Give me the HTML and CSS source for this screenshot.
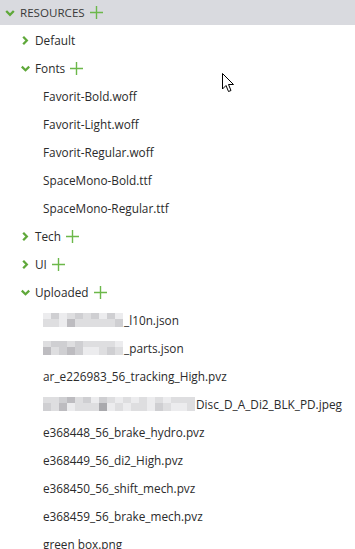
FILE: index.html
```html
<!DOCTYPE html>
<html>
<head>
<meta charset="utf-8">
<link rel="stylesheet" href="styles.css">
</head>
<body>
<div class="tree">
  <div class="header">
    <svg class="chev" width="10" height="10" viewBox="0 0 10 10"><path d="M1.2 3 L5 6.8 L8.8 3" /></svg>
    <span class="label">RESOURCES</span>
    <svg class="plus" width="13" height="13" viewBox="0 0 13 13"><path d="M6.5 0 V13 M0 6.5 H13" /></svg>
  </div>
  <div class="list">
    <div class="row folder"><svg class="chev" width="9" height="9" viewBox="0 0 9 9"><path d="M2.2 0.8 L5.8 4.5 L2.2 8.2" /></svg><span class="label">Default</span></div>
    <div class="row folder"><svg class="chev" width="9" height="9" viewBox="0 0 9 9"><path d="M0.8 2.6 L4.5 6.2 L8.2 2.6" /></svg><span class="label">Fonts</span><svg class="plus" width="13" height="13" viewBox="0 0 13 13"><path d="M6.5 0 V13 M0 6.5 H13" /></svg></div>
    <div class="row file">Favorit-Bold.woff</div>
    <div class="row file">Favorit-Light.woff</div>
    <div class="row file">Favorit-Regular.woff</div>
    <div class="row file">SpaceMono-Bold.ttf</div>
    <div class="row file">SpaceMono-Regular.ttf</div>
    <div class="row folder"><svg class="chev" width="9" height="9" viewBox="0 0 9 9"><path d="M2.2 0.8 L5.8 4.5 L2.2 8.2" /></svg><span class="label">Tech</span><svg class="plus" width="13" height="13" viewBox="0 0 13 13"><path d="M6.5 0 V13 M0 6.5 H13" /></svg></div>
    <div class="row folder"><svg class="chev" width="9" height="9" viewBox="0 0 9 9"><path d="M2.2 0.8 L5.8 4.5 L2.2 8.2" /></svg><span class="label">UI</span><svg class="plus" width="13" height="13" viewBox="0 0 13 13"><path d="M6.5 0 V13 M0 6.5 H13" /></svg></div>
    <div class="row folder"><svg class="chev" width="9" height="9" viewBox="0 0 9 9"><path d="M0.8 2.6 L4.5 6.2 L8.2 2.6" /></svg><span class="label">Uploaded</span><svg class="plus" width="13" height="13" viewBox="0 0 13 13"><path d="M6.5 0 V13 M0 6.5 H13" /></svg></div>
    <div class="row file"><span class="blur"><i class="a"></i><i class="b"></i><i class="c"></i><i class="b"></i><i class="a"></i><i class="a"></i><i class="b"></i><i class="d"></i><i class="c"></i><i class="b"></i><i class="b"></i><i class="b"></i><i class="c"></i><i class="b"></i><i class="a"></i><i class="b"></i><i class="c"></i><i class="b"></i><i class="a"></i><i class="c"></i></span>_l10n.json</div>
    <div class="row file"><span class="blur"><i class="b"></i><i class="d"></i><i class="c"></i><i class="b"></i><i class="c"></i><i class="c"></i><i class="b"></i><i class="d"></i><i class="c"></i><i class="c"></i><i class="b"></i><i class="a"></i><i class="b"></i><i class="a"></i><i class="b"></i><i class="b"></i><i class="b"></i><i class="c"></i><i class="a"></i><i class="b"></i></span>_parts.json</div>
    <div class="row file">ar_e226983_56_tracking_High.pvz</div>
    <div class="row file"><span class="blur"><i class="b"></i><i class="c"></i><i class="b"></i><i class="b"></i><i class="c"></i><i class="d"></i><i class="d"></i><i class="a"></i><i class="b"></i><i class="b"></i><i class="c"></i><i class="b"></i><i class="a"></i><i class="b"></i><i class="c"></i><i class="e"></i><i class="b"></i><i class="a"></i><i class="a"></i><i class="b"></i><i class="b"></i><i class="a"></i><i class="a"></i><i class="b"></i><i class="b"></i><i class="b"></i><i class="a"></i><i class="a"></i><i class="b"></i><i class="c"></i><i class="a"></i><i class="b"></i><i class="b"></i><i class="a"></i><i class="b"></i><i class="a"></i><i class="b"></i><i class="b"></i></span>Disc_D_A_Di2_BLK_PD.jpeg</div>
    <div class="row file">e368448_56_brake_hydro.pvz</div>
    <div class="row file">e368449_56_di2_High.pvz</div>
    <div class="row file">e368450_56_shift_mech.pvz</div>
    <div class="row file">e368459_56_brake_mech.pvz</div>
    <div class="row file">green box.png</div>
  </div>
  <svg class="cursor" width="13" height="20" viewBox="0 0 13 20"><path d="M0.5 0.5 V16 L4 12.5 L6.5 18.5 L9 17.5 L6.5 11.5 L11.5 11.5 Z" /></svg>
</div>
</body>
</html>
```

FILE: styles.css
```css
* { box-sizing: border-box; }
html, body { margin: 0; padding: 0; background: #ffffff; }
body {
  font-family: "Open Sans", "Noto Sans", sans-serif;
  font-size: 11.8px;
  color: #2b2b2b;
  width: 355px;
  height: 549px;
  overflow: hidden;
}
.tree { position: relative; }
.header {
  height: 25px;
  background: #d9dadf;
  display: flex;
  align-items: center;
  padding-left: 5px;
  font-size: 11.6px;
  color: #3a3a3a;
}
.header .label { margin-left: 5px; }
.chev { flex: none; }
.chev path { fill: none; stroke: #5fa83a; stroke-width: 2.3; stroke-linecap: butt; stroke-linejoin: miter; }
.plus { flex: none; margin-left: 5px; }
.plus path { stroke: #6cb84a; stroke-width: 1.4; fill: none; }
.list { padding-top: 1px; }
.row {
  height: 28px;
  display: flex;
  align-items: center;
  white-space: nowrap;
}
.folder { padding-left: 21px; }
.folder .label { margin-left: 5px; }
.file { padding-left: 43px; }
.blur {
  display: inline-grid;
  grid-template-rows: 6px 8px;
  grid-auto-flow: column;
  grid-auto-columns: 8px;
  margin-right: 1px;
}
.blur i { display: block; }
.blur .a { background: #ececee; }
.blur .b { background: #dedee0; }
.blur .c { background: #cfcfd2; }
.blur .d { background: #bdbcc0; }
.blur .e { background: #a9a9ad; }
.cursor { position: absolute; left: 222px; top: 73px; }
.cursor path { fill: #ffffff; stroke: #000000; stroke-width: 1; }
```
